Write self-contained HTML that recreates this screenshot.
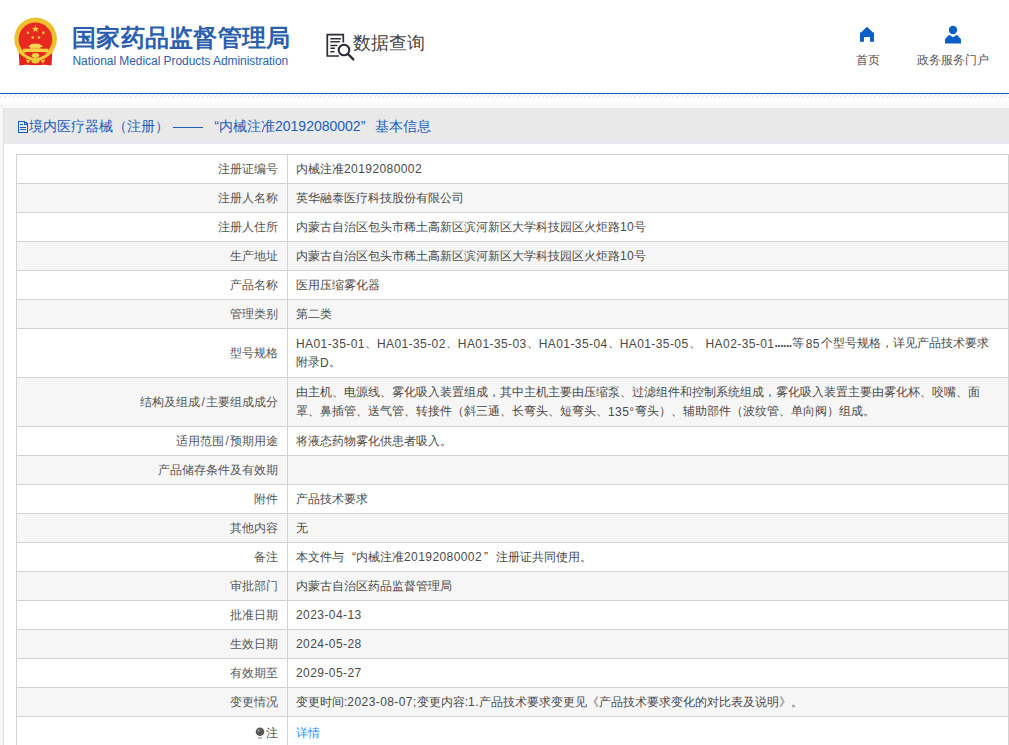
<!DOCTYPE html>
<html><head><meta charset="utf-8">
<style>
*{box-sizing:border-box;margin:0;padding:0}
html,body{width:1009px;height:745px;overflow:hidden;background:#fff;font-family:"Liberation Sans",sans-serif;color:#333}
.hdr{position:absolute;left:0;top:0;width:1009px;height:93px;background:#fff}
.emblem{position:absolute;left:12px;top:17px;width:48px;height:50px}
.t-cn{position:absolute;left:72px;top:23px;font-size:24px;font-weight:bold;letter-spacing:0.3px;color:#2b5fae;white-space:nowrap;line-height:30px}
.t-en{position:absolute;left:72.5px;top:53px;font-size:12px;letter-spacing:-0.06px;color:#2b5fae;white-space:nowrap;line-height:16px}
.dq{position:absolute;left:324.5px;top:31.5px;width:32px;height:30px}
.dq-t{position:absolute;left:353px;top:30px;font-size:18px;color:#444;line-height:26px;white-space:nowrap}
.nav{position:absolute;top:24px;text-align:center;font-size:12px;color:#555;line-height:16px}
.blue-line{position:absolute;left:0;top:93px;width:1009px;height:1px;background:#0b5fc1}
.hatch{position:absolute;left:0;top:94px;width:1009px;height:4px}
.shadow{position:absolute;left:0;top:98px;width:1009px;height:12px;background:linear-gradient(#fff,#f6f6f6)}
.box{position:absolute;left:3px;top:108px;width:1010px;height:700px;background:#fff;border-left:1px solid #e2e2e2}
.box-h{position:absolute;left:0;top:0;width:100%;height:36px;background:#e9e9e9;border-bottom:1px solid #e3e9f3}
.box-h .ttl{position:absolute;left:25px;top:9px;font-size:14px;color:#1a5fb9;line-height:18px;white-space:nowrap}
.doc{position:absolute;left:14px;top:13px}
table{position:absolute;left:12px;top:46px;width:993px;border-collapse:collapse;font-size:12px;color:#555}
td{border:1px solid #d3d3d3;height:29px;line-height:19px;vertical-align:middle}
td.l{width:271px;text-align:right;padding-right:9px}
td.v{padding-left:8px;padding-right:4px;color:#4a4a4a;white-space:nowrap}
tr:nth-child(even) td{background:#f6f6f6}
tr.dbl td{height:49px}
tr.last td{height:34px}
a{color:#2a8ef0;text-decoration:none}
.n{letter-spacing:0.42px}
.sl{margin:0 1.2px}
tr.dbl .n{position:relative;top:1px}
.q{display:inline-block;width:1em;text-align:right}
.q2{display:inline-block;width:1em;text-align:left}
.dash{display:inline-block;width:30px;height:1px;background:#1a5fb9;vertical-align:middle;margin:0 2px 0 4px}
</style></head><body>
<div class="hdr">
  <svg class="emblem" viewBox="0 0 48 50">
    <circle cx="23.6" cy="21.9" r="21.3" fill="#efbf2e"/>
    <circle cx="23.4" cy="22.3" r="16.8" fill="#e8291f"/>
    <path d="M6.8 35 Q13 36 17 37 L23.5 42 L30 37 Q34 36 40.2 35 L39.6 48.6 L33 47.8 L23.5 48.2 L14 47.8 L7.4 48.6 Z" fill="#e3231b"/>
    <path d="M5 30 Q14 40 23.5 41.5 Q33 40 42 30 L41 35 Q32 44 23.5 44 Q15 44 6 35 Z" fill="#f3cc3a"/>
    <ellipse cx="23.5" cy="38.3" rx="3.5" ry="2.2" fill="#f5d447"/>
    <polygon points="23.5,8.3 24.5,10.9 27.2,10.9 25,12.6 25.9,15.3 23.5,13.6 21.1,15.3 22,12.6 19.8,10.9 22.5,10.9" fill="#f5d040"/>
    <circle cx="15.9" cy="15.7" r="1.3" fill="#f2c83a"/><circle cx="31.4" cy="15.9" r="1.3" fill="#f2c83a"/>
    <circle cx="20.7" cy="20.5" r="1.3" fill="#f2c83a"/><circle cx="27" cy="20.5" r="1.3" fill="#f2c83a"/>
    <path d="M20 26.7 H27 L30.5 29 V30 H16.7 V29 Z" fill="#f7d658"/>
    <rect x="18" y="30" width="10.5" height="1.7" fill="#f3cf4a"/>
    <rect x="11" y="31.7" width="25.2" height="3.3" fill="#f5d044"/>
    <ellipse cx="23.5" cy="44.5" rx="4" ry="1.9" fill="#f3cc3a"/>
    <path d="M13.5 42.5 L18.5 43.5 L16 46.5 Z M33.5 42.5 L28.5 43.5 L31 46.5 Z" fill="#f3cc3a"/>
  </svg>
  <div class="t-cn">国家药品监督管理局</div>
  <div class="t-en">National Medical Products Administration</div>
  <svg class="dq" viewBox="0 0 32 30">
    <path d="M14 24 H2.3 V2.7 H18.3 V10.5" fill="none" stroke="#2a2a3a" stroke-width="1.7"/>
    <path d="M5.3 6.8 H16 M5.3 9.8 H14.8 M5.3 13.4 H12.4 M5.3 16.3 H10 M5.3 19.7 H9.4" stroke="#333" stroke-width="1.5"/>
    <circle cx="19" cy="18" r="5.3" fill="none" stroke="#2a2a3a" stroke-width="2"/>
    <path d="M23 22 L28.3 27.4" stroke="#2a2a3a" stroke-width="2.4" stroke-linecap="round"/>
  </svg>
  <div class="dq-t">数据查询</div>
  <div class="nav" style="left:852px;width:32px">
    <svg width="18" height="18" viewBox="0 0 18 18" style="position:absolute;left:6px;top:1px"><path d="M2 7.5 H3 L9 1.7 L15 7.5 H16 V16.8 H12 V12.1 H6 V16.8 H2 Z" fill="#0b5fc6"/></svg>
    <div style="position:absolute;left:0;top:28px;width:32px">首页</div>
  </div>
  <div class="nav" style="left:914px;width:78px">
    <svg width="18" height="20" viewBox="0 0 18 20" style="display:block;margin:0 auto"><circle cx="9" cy="6" r="4.2" fill="#0b5fc6"/><path d="M5 10.8 L9 13.2 L13 10.8 L17 15.2 V19.6 H1 V15.2 Z" fill="#0b5fc6"/></svg>
    <div style="margin-top:8px">政务服务门户</div>
  </div>
</div>
<div class="blue-line"></div>
<svg class="hatch" width="1009" height="4"><defs><pattern id="hp" width="4.2" height="4" patternUnits="userSpaceOnUse"><path d="M0 4 L4 0" stroke="#e2e2e2" stroke-width="0.9"/></pattern></defs><rect x="0" y="0" width="1009" height="4" fill="url(#hp)"/></svg>
<div class="shadow"></div>
<div style="position:absolute;left:0;top:104px;width:3px;height:641px;background:linear-gradient(to right,#f9f9f9,#f3f3f3)"></div>
<div class="box">
  <div class="box-h">
    <svg class="doc" width="10" height="12" viewBox="0 0 10 12" shape-rendering="crispEdges"><g fill="#0a5fc8"><rect x="0" y="0" width="7" height="1"/><rect x="0" y="0" width="1" height="12"/><rect x="0" y="11" width="10" height="1"/><rect x="9" y="2" width="1" height="10"/><rect x="8" y="1" width="1" height="1"/><rect x="6" y="1" width="3" height="3"/><rect x="2" y="3" width="3" height="1"/><rect x="2" y="6" width="6" height="1"/><rect x="2" y="8" width="6" height="1"/></g><rect x="7" y="2" width="1" height="1" fill="#fff"/></svg>
    <div class="ttl">境内医疗器械（注册）<span class="dash"></span><span class="q">“</span>内械注准20192080002<span class="q2">”</span>基本信息</div>
  </div>
  <table>
    <tr><td class="l">注册证编号</td><td class="v">内械注准<span class="n">20192080002</span></td></tr>
    <tr><td class="l">注册人名称</td><td class="v">英华融泰医疗科技股份有限公司</td></tr>
    <tr><td class="l">注册人住所</td><td class="v">内蒙古自治区包头市稀土高新区滨河新区大学科技园区火炬路<span class="n">10</span>号</td></tr>
    <tr><td class="l">生产地址</td><td class="v">内蒙古自治区包头市稀土高新区滨河新区大学科技园区火炬路<span class="n">10</span>号</td></tr>
    <tr><td class="l">产品名称</td><td class="v">医用压缩雾化器</td></tr>
    <tr><td class="l">管理类别</td><td class="v">第二类</td></tr>
    <tr class="dbl"><td class="l">型号规格</td><td class="v"><span class="n">HA01-35-01</span>、<span class="n">HA01-35-02</span>、<span class="n">HA01-35-03</span>、<span class="n">HA01-35-04</span>、<span class="n">HA01-35-05</span>、<span style="display:inline-block;width:5px"></span><span class="n">HA02-35-01</span><b style="letter-spacing:-0.45px">......</b>等<span class="n" style="margin:0 1px 0 2px">85</span>个型号规格，详见产品技术要求<br>附录<span class="n">D</span>。</td></tr>
    <tr class="dbl"><td class="l">结构及组成<span class="sl">/</span>主要组成成分</td><td class="v">由主机、电源线、雾化吸入装置组成，其中主机主要由压缩泵、过滤组件和控制系统组成，雾化吸入装置主要由雾化杯、咬嘴、面<br>罩、鼻插管、送气管、转接件（斜三通、长弯头、短弯头、<span class="n">135°</span>弯头）、辅助部件（波纹管、单向阀）组成。</td></tr>
    <tr><td class="l">适用范围<span class="sl">/</span>预期用途</td><td class="v">将液态药物雾化供患者吸入。</td></tr>
    <tr><td class="l">产品储存条件及有效期</td><td class="v"></td></tr>
    <tr><td class="l">附件</td><td class="v">产品技术要求</td></tr>
    <tr><td class="l">其他内容</td><td class="v">无</td></tr>
    <tr><td class="l">备注</td><td class="v">本文件与<span class="q">“</span>内械注准<span class="n">20192080002</span><span class="q2" style="margin-left:2px">”</span>注册证共同使用。</td></tr>
    <tr><td class="l">审批部门</td><td class="v">内蒙古自治区药品监督管理局</td></tr>
    <tr><td class="l">批准日期</td><td class="v"><span class="n">2023-04-13</span></td></tr>
    <tr><td class="l">生效日期</td><td class="v"><span class="n">2024-05-28</span></td></tr>
    <tr><td class="l">有效期至</td><td class="v"><span class="n">2029-05-27</span></td></tr>
    <tr><td class="l">变更情况</td><td class="v">变更时间:<span class="n">2023-08-07;</span>变更内容:<span class="n">1.</span>产品技术要求变更见《产品技术要求变化的对比表及说明》。</td></tr>
    <tr class="last"><td class="l"><svg width="10" height="12" viewBox="0 0 10 12" style="vertical-align:-2px;margin-right:1px"><circle cx="5" cy="4.8" r="4.3" fill="#5a5a5a"/><circle cx="3.6" cy="3.4" r="1" fill="#fff" opacity="0.5"/><rect x="3" y="10.5" width="4" height="1" fill="#777"/></svg>注</td><td class="v"><a>详情</a></td></tr>
  </table>
</div>
</body></html>
